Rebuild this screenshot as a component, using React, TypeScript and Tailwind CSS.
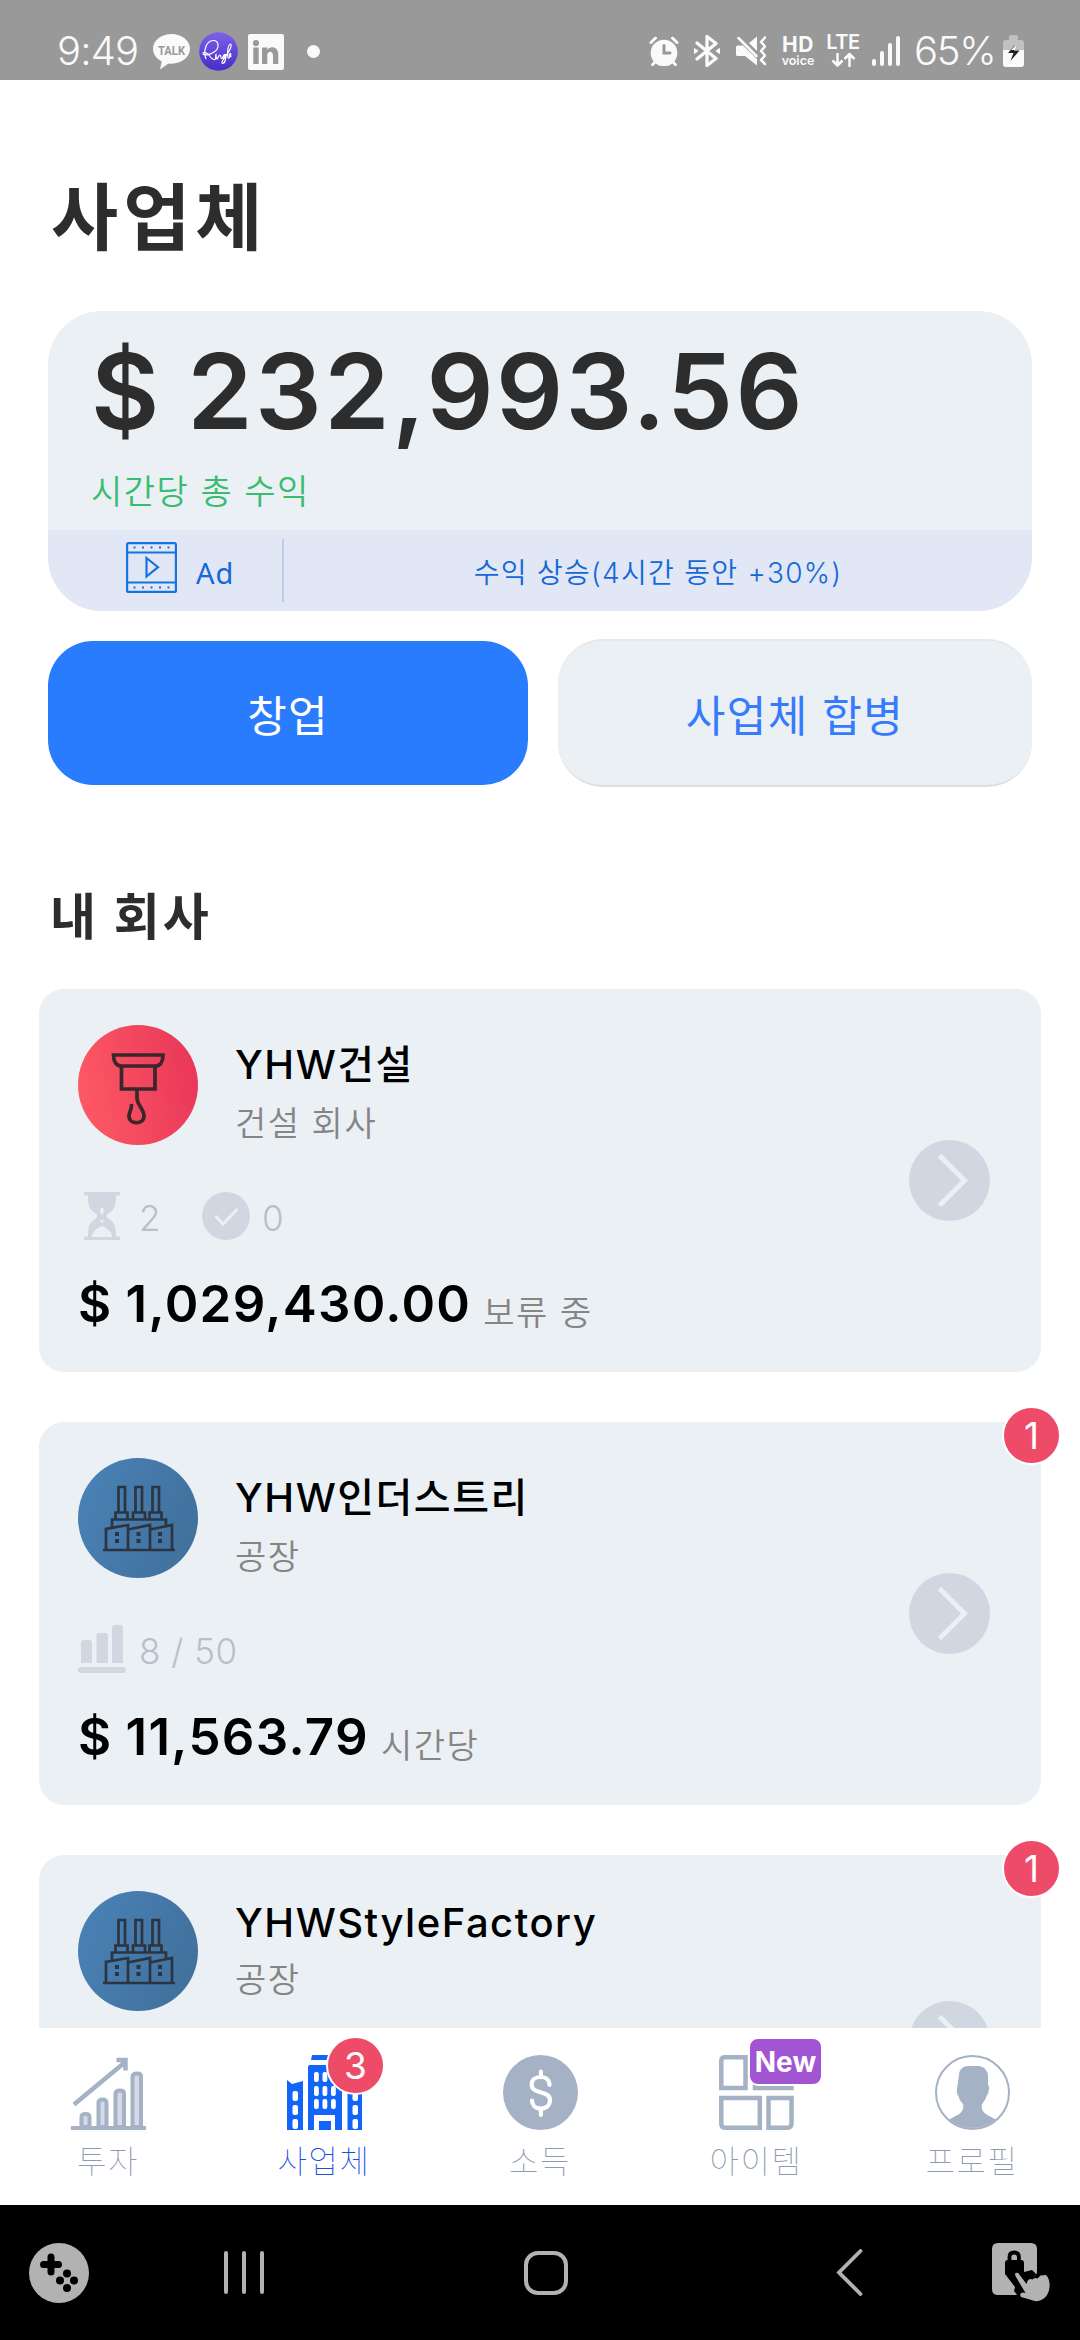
import React from 'react';

type Company = {
    name: string;
    kind: string;
    icon: 'hook' | 'factory';
    money?: string;
    note?: string;
    badge?: number;
    latin?: boolean;
};

const companies: Company[] = [
    { name: 'YHW건설', kind: '건설 회사', icon: 'hook', money: '$ 1,029,430.00', note: '보류 중' },
    { name: 'YHW인더스트리', kind: '공장', icon: 'factory', money: '$ 11,563.79', note: '시간당', badge: 1 },
    { name: 'YHWStyleFactory', kind: '공장', icon: 'factory', badge: 1, latin: true },
];

const StatusBar: React.FC = () => (
    <header className="flex h-20 shrink-0 items-start bg-[#999] pt-8 pl-[57px] text-[#fafafa]">
        <span className="w-[96px] text-[40px] leading-[38px] font-light tracking-[-.8px]">9:49</span>
        <svg className="mt-0.5 h-9 w-[37px]" viewBox="0 0 37 36">
            <path d="M18.500 0C8.300 0 0 6.600 0 14.800c0 5.300 3.500 10 8.700 12.700L7 35.500l8.500-6c1 .1 2 .2 3 .2 10.200 0 18.500-6.700 18.500-14.900S28.700 0 18.500 0Z" fill="#fafafa" />
            <text x="18.500" y="20.500" textAnchor="middle" fontSize="13" fontWeight="700" fill="#999" fontFamily="Roboto" textLength="27" lengthAdjust="spacingAndGlyphs">TALK</text>
        </svg>
        <svg className="ml-[9px] h-[39px] w-[39px]" viewBox="0 0 39 39">
            <defs>
                <linearGradient id="ringle" x1="0" y1="0" x2="0" y2="1">
                    <stop offset="0" stopColor="#7d62ea" />
                    <stop offset="1" stopColor="#472cc8" />
                </linearGradient>
            </defs>
            <circle cx="19.500" cy="19.500" r="19.300" fill="url(#ringle)" />
            <path d="M7 27C4 19 7 9 14 8.500c6-.3 7 8 1 11.500-4 3-11 4-11 1.500 0-2 4-1 6 1.500 2 3 4 5 6 4.500 1.500-1 0-4 1-5 .3 3 .2 5.500 1.500 4s1-3.500 2.500-3.500.2 3.500 1.500 3.500 1.800-4.500 3.500-4-.7 4.500-2 3.500 3-2.500 3-4c0 4-1 9.500-3.500 9.500-2-1 2-6 4.500-9s5.500-10 3.500-10.500c-3.500 1-4 17-1 13.500 1-1.500 2-3.500 1-4-2 0-1.500 4.500.8 2.500" fill="none" stroke="#fff" strokeWidth="1.200" />
        </svg>
        <svg className="mt-0.5 ml-2.5 h-9 w-9" viewBox="0 0 36 36">
            <path fillRule="evenodd" fill="#fafafa" d="M2 0h32a2 2 0 0 1 2 2v32a2 2 0 0 1-2 2H2a2 2 0 0 1-2-2V2a2 2 0 0 1 2-2ZM5.300 13.500V30h5.400V13.500ZM8 6a3.100 3.100 0 1 0 0 6.200A3.100 3.100 0 0 0 8 6Zm6 7.500V30h5.300v-8.500c0-5 5.700-5 5.700 0V30h5.300v-9.800c0-8-8.300-8.700-11-4.500v-2.200Z" />
        </svg>
        <span className="mt-[13px] ml-[23px] h-[13px] w-[13px] rounded-full bg-[#fafafa]" />

        <div className="mr-[56px] ml-auto flex items-start">
            <svg className="mt-1 h-[30px] w-[30px]" viewBox="0 0 30 30">
                <circle cx="15" cy="17" r="13.300" fill="#fafafa" />
                <path d="M2 6.500 6.500 2M28 6.500 23.500 2M6 26l-2.500 2.700M24 26l2.500 2.700" stroke="#fafafa" strokeWidth="3" strokeLinecap="round" />
                <path d="M15 9.500V17h6" fill="none" stroke="#999" strokeWidth="3" strokeLinecap="round" />
            </svg>
            <svg className="mt-[3px] ml-[14px] h-8 w-7" viewBox="0 0 28 32">
                <path d="M4 8l19 15.500-9 7V1.500l9 7L4 24" fill="none" stroke="#fafafa" strokeWidth="3.300" strokeLinejoin="round" strokeLinecap="round" />
                <path d="M1.500 13.500v5l3.500-2.500ZM26.500 13.500v5L23 16Z" fill="#fafafa" stroke="#fafafa" strokeLinejoin="round" />
            </svg>
            <svg className="mt-1 ml-[15px] h-[30px] w-[30px]" viewBox="0 0 30 30">
                <path d="M0 11q0-1.500 1.500-1.500H7L21 23v6.500L9 20H1.500Q0 20 0 18.500ZM21 .5V15L13 7Z" fill="#fafafa" />
                <path d="m2.500 2 18 18" stroke="#fafafa" strokeWidth="2.500" strokeLinecap="round" />
                <path d="m29 1.500-4 4.500 4 4.500-4 4.500 4 4.500-4 4.500 4 4" fill="none" stroke="#fafafa" strokeWidth="2.600" strokeLinecap="round" strokeLinejoin="round" />
            </svg>
            <div className="mt-[3px] ml-[15px] flex w-[34px] flex-col items-center">
                <span className="text-[21px] leading-[20px] font-bold tracking-[.5px]">HD</span>
                <span className="text-[12.500px] leading-[12px] font-semibold">voice</span>
            </div>
            <div className="mt-px ml-[11px] flex w-[34px] flex-col items-center">
                <span className="h-[19px] text-[20px] leading-[19px] font-semibold tracking-[-.5px]">LTE</span>
                <svg className="h-[15px] w-[25px]" viewBox="0 0 25 15">
                    <path d="M6.500 1v12.500m-5-5 5 5 5-5M18.500 15V2m-5 5 5-5 5 5" fill="none" stroke="#fafafa" strokeWidth="2.500" strokeLinejoin="round" />
                </svg>
            </div>
            <div className="mt-1 ml-3 flex h-[30px] items-end gap-1">
                <i className="h-[7px] w-1 rounded-full bg-[#fafafa]" />
                <i className="h-[15px] w-1 rounded-full bg-[#fafafa]" />
                <i className="h-[23px] w-1 rounded-full bg-[#fafafa]" />
                <i className="h-[30px] w-1 rounded-full bg-[#fafafa]" />
            </div>
            <span className="ml-[14px] w-[89px] text-[40px] leading-[38px] font-light tracking-[-1.300px]">65%</span>
            <svg className="mt-[3px] h-8 w-[21px]" viewBox="0 0 21 32">
                <path d="M6 2q0-2 2-2h5q2 0 2 2v3h3q3 0 3 3v7H0V8q0-3 3-3h3Z" fill="#c0c0c0" />
                <path d="M0 15h21v14q0 3-3 3H3q-3 0-3-3Z" fill="#fafafa" />
                <path d="m12 10-7 8h5.500L7.500 26l9-10.500H11Z" fill="#222" />
                <path d="m13 10-5 5h4Z" fill="#fafafa" />
            </svg>
        </div>
    </header>
);

const HookIcon = () => (
    <svg className="h-[120px] w-[120px] shrink-0" viewBox="0 0 120 120">
        <defs>
            <linearGradient id="red" x1="0" y1=".6" x2="1" y2=".4">
                <stop offset="0" stopColor="#fd5963" />
                <stop offset="1" stopColor="#e9375a" />
            </linearGradient>
        </defs>
        <circle cx="60" cy="60" r="60" fill="url(#red)" />
        <g fill="none" stroke="#3a262b" strokeWidth="3.700">
            <path d="M35.500 30h49.500c0 7-3 11-7.500 11h-34c-5 0-8-4-8-11ZM43.500 41v23H77V41M59 64v9c0 7 7 11 7 18 0 9-15 9-15 0 0-4 3-6 2.500-12" />
        </g>
    </svg>
);

const FactoryIcon = () => (
    <svg className="h-[120px] w-[120px] shrink-0" viewBox="0 0 120 120">
        <defs>
            <linearGradient id="blue" x1="0" y1=".3" x2="1" y2=".7">
                <stop offset="0" stopColor="#4981b5" />
                <stop offset="1" stopColor="#41709b" />
            </linearGradient>
        </defs>
        <circle cx="60" cy="60" r="60" fill="url(#blue)" />
        <g fill="none" stroke="#2b3541" strokeWidth="2.700">
            <path d="M40.500 54V29h6.500v25M57.500 54V29H64v25M74.500 54V29H81v25M37.500 61v-6.500h12V61M55 61v-6.500h12V61M71.500 61v-6.500h12V61M34 69v-7.500h54V67" />
            <path d="M28 92V71l22-4v25M50 71.500 72 67v25M72 71.500 94 67v25M25 92h72" />
        </g>
        <path d="M37 74h4v4h-4zM37 81h4v4h-4zM58.500 74h4v4h-4zM58.500 81h4v4h-4zM80 74h4v4h-4zM80 81h4v4h-4z" fill="#2b3541" />
    </svg>
);

const ProjectStats = () => (
    <>
        <svg className="h-12 w-12" viewBox="0 0 48 48" fill="#d1d7e0">
            <path d="M6 0h36v3.500H6zM6 44.500h36V48H6zM10 3h28c0 11-1 14-7 18-3 2-3 4 0 6 6 4 7 8 7 18H10c0-10 1-14 7-18 3-2 3-4 0-6-6-4-7-7-7-18Z" />
            <path d="M14 45c0-4 3-8 10-11 7 3 10 7 10 11ZM22.300 17q1.700-2.500 3.400 0v4q-1.700 2-3.400 0Z" fill="#ebf0f5" />
            <circle cx="24" cy="29" r="1.600" fill="#ebf0f5" />
        </svg>
        <span className="mt-1 ml-[13px] w-[63px]">2</span>
        <svg className="h-12 w-12" viewBox="0 0 48 48">
            <circle cx="24" cy="24" r="24" fill="#d1d7e0" />
            <path d="m13.500 24 7.500 8 14.500-15" fill="none" stroke="#ebf0f5" strokeWidth="3" />
        </svg>
        <span className="mt-1 ml-3">0</span>
    </>
);

const CapacityStats = () => (
    <>
        <svg className="h-12 w-12" viewBox="0 0 48 48" fill="#d1d7e0">
            <path d="M3 38V18q0-3 3-3h5q3 0 3 3v20zM18.500 38V11q0-3 3-3h5.500q3 0 3 3v27zM34 38V3q0-3 3-3h5q3 0 3 3v35z" />
            <rect y="42" width="48" height="6" rx="3" />
        </svg>
        <span className="mt-1 ml-[13px]">8 / 50</span>
    </>
);

const Badge: React.FC<{ value: number }> = ({ value }) => (
    <span className="flex h-[59px] w-[59px] items-center justify-center rounded-full border-2 border-white bg-[#ed4b68] text-[37px] leading-none text-white">{value}</span>
);

const CompanyCard: React.FC<{ company: Company }> = ({ company }) => (
    <div className={`relative flex shrink-0 items-center rounded-[25px] bg-[#ebf0f5] pr-[51px] pl-[39px] ${company.latin ? 'h-[373px]' : 'h-[383px]'}`}>
        <div className="flex h-full flex-1 flex-col pt-9">
            <div className="flex h-[120px] gap-[37px]">
                {company.icon === 'hook' ? <HookIcon /> : <FactoryIcon />}
                <div className={company.latin ? 'pt-[7px]' : 'pt-[15px]'}>
                    <div className="h-[50px] text-[40px] leading-[50px] font-medium tracking-[1.500px] text-black">{company.name}</div>
                    <div className={`text-[34px] leading-[50px] font-[350] tracking-[1.500px] text-[#858585] ${company.latin ? 'mt-[7px]' : 'mt-[9px]'}`}>{company.kind}</div>
                </div>
            </div>
            {company.money && (
                <>
                    <div className="mt-[47px] flex h-12 items-center text-[35px] leading-none font-light tracking-[.5px] text-[#b9bfca]">
                        {company.icon === 'hook' ? <ProjectStats /> : <CapacityStats />}
                    </div>
                    <div className="mt-[29px] flex items-baseline gap-3">
                        <span className="text-[51px] leading-[70px] font-semibold tracking-[1.300px] [word-spacing:-1px] text-black">{company.money}</span>
                        <span className="translate-y-[3px] text-[34px] font-[350] tracking-[1.500px] text-[#858585]">{company.note}</span>
                    </div>
                </>
            )}
        </div>
        <svg className="h-[81px] w-[81px]" viewBox="0 0 81 81">
            <circle cx="40.500" cy="40.500" r="40.500" fill="#d1d7e0" />
            <path d="m30.500 15.500 25 25-25 25" fill="none" stroke="#ebf0f5" strokeWidth="5" />
        </svg>
        {company.badge && <div className="absolute -top-4 -right-5"><Badge value={company.badge} /></div>}
    </div>
);

const InvestIcon = () => (
    <svg className="h-[75px] w-[75px]" viewBox="0 0 75 75">
        <path d="M0 71h75v4H0z" fill="#a5b1c4" />
        <path d="M10.500 72V62q0-3 4-3t4 3v10zM27.500 72V48q0-3.500 4-3.500t4 3.500v24zM44.500 72V39q0-3.500 4.500-3.500t4 3.500v33zM61.500 72V22q0-3.500 4.500-3.500t4 3.500v50z" fill="#d5dbe4" stroke="#a5b1c4" strokeWidth="4" />
        <path d="M3 49.500 53 8M45.500 5H54.500V15.500" fill="none" stroke="#a5b1c4" strokeWidth="4.500" />
    </svg>
);

const BusinessIcon = () => (
    <svg className="h-[75px] w-[75px]" viewBox="0 0 75 75">
        <path d="M25 0h28v5H24zM21 12q0-2 2-2h30q2 0 2 2v63H21zM0 25l5 4 11-3v49H0zM60.500 26l14.500 4v45H60.500z" fill="#1365f8" />
        <path d="M27 75V60h21v15h-4v-9H32v9Z" fill="#fff" />
        <g fill="#fff">
            {[17, 31, 44].map((y) => [27, 35.500, 44].map((x) => <rect key={`${x}-${y}`} x={x} y={y} width="4.800" height="10" rx="2" />))}
            {[36, 50, 64].map((y) => [5.500, 65.500].map((x) => <rect key={`${x}-${y}`} x={x} y={y} width="5.500" height="10" rx="2" />))}
        </g>
    </svg>
);

const IncomeIcon = () => (
    <svg className="h-[75px] w-[75px]" viewBox="0 0 75 75">
        <circle cx="37.500" cy="37.500" r="37.500" fill="#a5b1c4" />
        <path d="M46.500 30c0-4.500-3.500-8-9-8s-8.800 3-8.800 7.500c0 10.500 18.300 5.500 18.300 15.500 0 5-3.500 8.500-9.200 8.500S29 50 29 45.500M37.900 16.500V22M37.900 54v6" fill="none" stroke="#fff" strokeWidth="4.200" strokeLinecap="round" />
    </svg>
);

const ItemsIcon = () => (
    <svg className="h-[75px] w-[75px]" viewBox="0 0 75 75" fill="none" stroke="#a5b1c4" strokeWidth="4.500">
        <path d="M2.300 33V6q0-3.700 3.700-3.700h20.500V33zM36 33V2.300h32q4.500 0 4.500 4V33zM2.300 43h38.500v29.700H6q-3.700 0-3.700-4zM49.500 43h23v25.500q0 4.200-4 4.200h-19z" />
    </svg>
);

const ProfileIcon = () => (
    <svg className="h-[75px] w-[75px]" viewBox="0 0 75 75">
        <circle cx="37.500" cy="37.500" r="36.500" fill="none" stroke="#a5b1c4" strokeWidth="2" />
        <path d="M24 20c0-6 5-9 9-9h10c5 0 10 4 10 10v9q1.500 1 1 4-.5 5-2.500 7c-1 4-3 6-4.500 8-2 9 6 11 14 15.500a37 37 0 0 1-47 0C22 60 30 58 28 49c-2-2-4-5-4.500-8-2-2-2-7-1-10Z" fill="#a5b1c4" />
    </svg>
);

const tabs = [
    { label: '투자', icon: <InvestIcon /> },
    { label: '사업체', icon: <BusinessIcon />, active: true, count: 3 },
    { label: '소득', icon: <IncomeIcon /> },
    { label: '아이템', icon: <ItemsIcon />, isNew: true },
    { label: '프로필', icon: <ProfileIcon /> },
];

const TabBar: React.FC = () => (
    <nav className="grid h-[177px] shrink-0 grid-cols-5 bg-white">
        {tabs.map((tab) => (
            <div key={tab.label} className="relative flex flex-col items-center pt-[27px]">
                {tab.icon}
                <span className={`mt-3 text-[32px] leading-10 font-thin tracking-[1.500px] ${tab.active ? 'text-[#1c4fe0]' : 'text-[#8d9ab0]'}`}>{tab.label}</span>
                {tab.count && <div className="absolute top-2 left-[110px]"><Badge value={tab.count} /></div>}
                {tab.isNew && (
                    <span className="absolute top-[9px] left-[100px] flex h-[49px] w-[75px] items-center justify-center rounded-[10px] border-2 border-white bg-[#a155d3] text-[28px] leading-none font-bold text-white">New</span>
                )}
            </div>
        ))}
    </nav>
);

const SystemBar: React.FC = () => (
    <footer className="flex h-[135px] shrink-0 items-center bg-black pr-[30px] pl-[29px]">
        <svg className="h-[60px] w-[60px]" viewBox="0 0 60 60">
            <circle cx="30" cy="30" r="30" fill="#b2b2b2" />
            <path d="M22 14v15M14.500 21.500h15" stroke="#000" strokeWidth="7" strokeLinecap="round" />
            <circle cx="38" cy="30.500" r="4" />
            <circle cx="31" cy="37.500" r="4" />
            <circle cx="45" cy="37.500" r="4" />
            <circle cx="38" cy="45" r="4" />
        </svg>
        <div className="ml-[135px] flex h-[43px] gap-3.5">
            <i className="w-1 rounded-full bg-[#b2b2b2]" />
            <i className="w-1 rounded-full bg-[#b2b2b2]" />
            <i className="w-1 rounded-full bg-[#b2b2b2]" />
        </div>
        <span className="ml-[260px] h-11 w-11 rounded-[14px] border-4 border-[#b2b2b2]" />
        <svg className="ml-[268px] h-[47px] w-[27px]" viewBox="0 0 27 47">
            <path d="M24.500 2 3 23.500 24.500 45" fill="none" stroke="#b2b2b2" strokeWidth="3.800" strokeLinecap="round" />
        </svg>
        <svg className="ml-auto h-[60px] w-[58px]" viewBox="0 0 58 60">
            <path d="M6 0h33q6 0 6 6v24L25 52H6q-6 0-6-6V6q0-6 6-6Z" fill="#b2b2b2" />
            <path d="M13 20q0-3 3-3h13q3 0 3 3v9l8-2 4 4-18 22-4-5 1-4-10-13Z" />
            <path d="M17.500 19v-5q0-4.500 4.700-4.500t4.700 4.500v5" fill="none" stroke="#000" strokeWidth="3.800" />
            <path d="M22.500 31q2.500-2.500 4.500 0l7.500 10 1-3q2-3 5-1.500 2-2.500 5-1l3-3 5.500-.5c4 4 4.500 11 2.500 17-3 8-11 11-17 8l-10.500-3q-2-3 1-4.500l3.500.5-9.500-16q-1.500-2.500-.5-4Z" fill="#b2b2b2" />
        </svg>
    </footer>
);

export default function App() {
    return (
        <div className="flex h-[2340px] w-[1080px] flex-col overflow-hidden bg-white font-['Inter','Noto_Sans_CJK_KR',sans-serif]">
            <StatusBar />

            <main className="flex min-h-0 flex-1 flex-col overflow-hidden px-[39px]">
                <h1 className="mt-[88px] h-[100px] shrink-0 pl-3 text-[73px] leading-[100px] font-bold tracking-[5px] text-[#2d2d2d]">사업체</h1>

                <section className="mx-[9px] mt-[43px] h-[300px] shrink-0 overflow-hidden rounded-[54px] bg-[#ebf0f5]">
                    <div className="h-[219px] pt-[18px] pl-[43px]">
                        <div className="h-[124px] text-[105px] leading-[124px] font-semibold tracking-[2.300px] [word-spacing:-3px] text-[#2d2d2d]">$ 232,993.56</div>
                        <div className="mt-[14px] text-[34px] leading-[50px] font-[350] tracking-[1.500px] text-[#38bd70]">시간당 총 수익</div>
                    </div>
                    <div className="flex h-[81px] items-center bg-[#e1e7f4] text-[#1468d8]">
                        <div className="flex h-full w-[234px] items-start pt-3 pl-[78px]">
                            <svg className="h-[51px] w-[51px]" viewBox="0 0 51 51" fill="none" stroke="#1673e0" strokeWidth="2.200">
                                <rect x="1.100" y="1.100" width="48.800" height="48.800" rx="1.500" />
                                <path d="M1 10.500h49M1 40.500h49M20.500 16v18.500l11.500-9.300Z" />
                                <path d="M7.500 5.500h37M7.500 45.500h37" strokeDasharray="2 6.500" />
                            </svg>
                            <span className="mt-[9px] ml-[19px] font-['Noto_Sans'] text-[29px] leading-[44px] tracking-[1px]">Ad</span>
                        </div>
                        <div className="h-[63px] w-0.5 bg-[#bccdec]" />
                        <div className="flex-1 pt-[5px] text-center text-[28px] leading-[44px] font-[350] tracking-[1.300px]">수익 상승(4시간 동안 +30%)</div>
                    </div>
                </section>

                <div className="mx-[9px] mt-7 flex h-[148px] shrink-0 items-center gap-[30px]">
                    <button className="h-36 w-[480px] rounded-[45px] bg-[#2a7cff] pt-1.5 text-[43px] tracking-[1.200px] text-white">창업</button>
                    <button className="h-[148px] flex-1 rounded-[45px] border-t-2 border-b-2 border-t-[#e8e8e8] border-b-[#dedede] bg-[#ebf0f5] pt-1.5 text-[43px] tracking-[1.400px] text-[#357bfb]">사업체 합병</button>
                </div>

                <h2 className="mt-[95px] h-[70px] shrink-0 pl-[11px] text-[50px] leading-[70px] font-bold tracking-[3px] text-[#2d2d2d]">내 회사</h2>

                <div className="mt-[37px] flex shrink-0 flex-col gap-[50px]">
                    {companies.map((c) => <CompanyCard key={c.name} company={c} />)}
                </div>
            </main>

            <TabBar />
            <SystemBar />
        </div>
    );
}
